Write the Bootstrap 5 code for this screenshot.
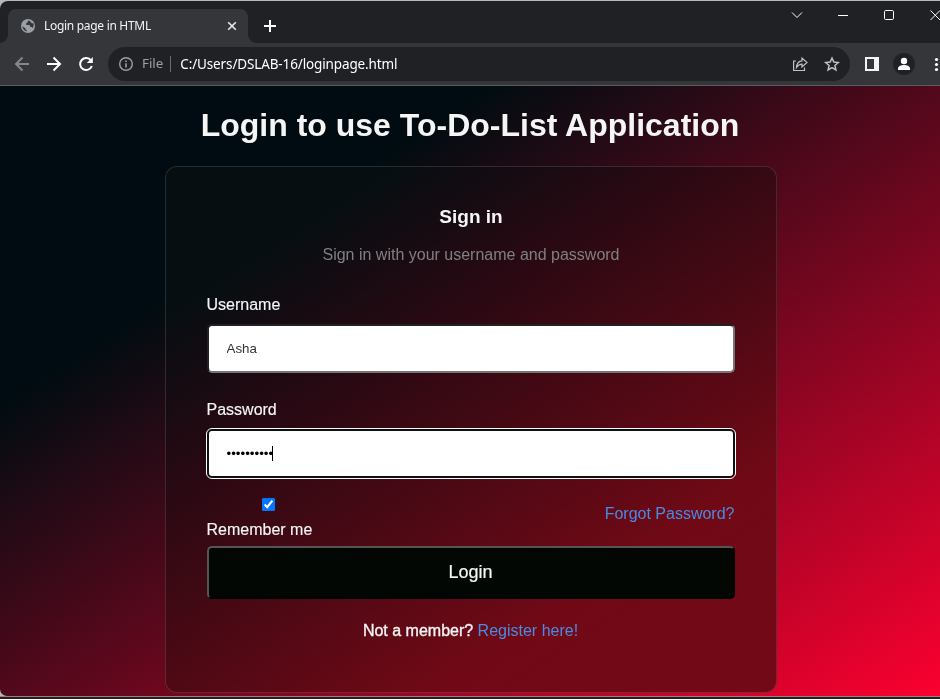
<!DOCTYPE html>
<html lang="en">
<head>
<meta charset="utf-8">
<title>Login page in HTML</title>
<link href="https://cdn.jsdelivr.net/npm/bootstrap@5.3.0/dist/css/bootstrap.min.css" rel="stylesheet">
<style>
  body { font-family: "Liberation Sans", Arial, sans-serif; background: #b4b9bb; width: 940px; height: 699px; overflow: hidden; }
  svg { display: block; flex: none; }
  .window { height: 696px; padding-top: 1px; }
  .chrome { font-family: "Noto Sans", "Open Sans", sans-serif; }
  .tabstrip { height: 42px; background: #202124; border-top-left-radius: 8px; padding-left: 8px; }
  .tab { width: 240px; height: 34px; margin-top: 8px; background: #35363a; border-radius: 8px 8px 0 0; padding: 0 11px 0 13px; position: relative; }
  .tab::before, .tab::after { content: ""; position: absolute; bottom: 0; width: 8px; height: 8px; }
  .tab::before { left: -8px; background: radial-gradient(circle at 0 0, #202124 7.5px, #35363a 8px); }
  .tab::after { right: -8px; background: radial-gradient(circle at 100% 0, #202124 7.5px, #35363a 8px); }
  .tab-title { font-size: 12px; color: #f1f3f4; margin-left: 9px; letter-spacing: -.3px; line-height: 16px; }
  .new-tab { margin: 18px 0 0 15px; }
  .toolbar { height: 43px; background: #35363a; border-bottom: 1px solid #5b5c60; padding-left: 14px; }
  .omnibox { width: 742px; height: 34px; border-radius: 17px; background: #202124; font-size: 13.5px; padding: 0 10px 0 11px; color: #fff; margin-left: 14px; }
  .divider { width: 1px; height: 16px; background: #6b6e72; margin: 0 9px 0 7px; }
  .scheme { color: #9aa0a6; margin-left: 9px; font-size: 13.3px; }
  .address { letter-spacing: -.13px; }
  .page { height: 610px; background: linear-gradient(147deg, #000c11 26%, #ff0030 101%); border-bottom-left-radius: 7px; }
  .page h1 { font-size: 32px; line-height: 38px; color: #f5f5f5; margin: 0; padding-top: 20px; height: 80px; }
  .glass { width: 612px; height: 527px; margin-left: 165px; padding: 0 41px; border: 1px solid rgba(255,255,255,.125); border-radius: 12px; background: rgba(11,15,13,.582); backdrop-filter: saturate(180%); color: #f5f5f5; line-height: 18px; }
  .glass h2 { font-size: 19px; line-height: 22px; margin: 0; padding-top: 39px; height: 78px; }
  .hint { color: #808080; height: 50px; margin: 0; padding-top: 1px; }
  .glass label { display: block; height: 29px; margin-left: -.5px; padding-top: 1px; }
  .glass label.second { margin-top: 27px; }
  .glass label, .options span { -webkit-text-stroke: .15px #f5f5f5; }
  .field { width: 528px; height: 49px; border-radius: 5px; background: #fff; color: #000; font-size: 13.33px; padding: 0 17.500px; }
  .field.user { border: 2px inset #767676; color: #333; outline: 0; display: block; }
  .field.pass { border: 2px solid #101010; outline: 1px solid #fff; }
  .caret { width: 1px; height: 15px; background: #000; margin-left: -1px; }
  .options { height: 68px; padding-top: 20px; }
  .options input { width: 13px; height: 13px; margin: 0 0 0 55px; display: block; }
  .options span { display: block; margin: 10px 0 0 -.5px; }
  .options a { margin: 7px .5px 0 0; }
  .glass a { color: #4a8be3; text-decoration: none; }
  .login { width: 528px; height: 53px; border: 2px outset #6b6b6b; border-radius: 5px; background: #030703; color: #f5f5f5; font-size: 18px; line-height: 20px; padding: 0 1px 2px 0; display: block; border-color: #555 #000 #000 #555; border-style: solid; -webkit-text-stroke: .2px #f5f5f5; }
  .signup { margin: 23px 0 0 -1px; }
  .signup span { -webkit-text-stroke: .35px #f5f5f5; }
  .bottomline { height: 3px; background: linear-gradient(#8e8286 1px, #2c1d1f 1px); }
</style>
<script src="https://cdn.jsdelivr.net/npm/bootstrap@5.3.0/dist/js/bootstrap.bundle.min.js"></script>
</head>
<body>
<div class="window">
  <header class="chrome">
    <div class="tabstrip d-flex">
      <div class="tab d-flex align-items-center">
        <svg width="14" height="14" viewBox="0 0 14 14"><circle cx="7" cy="7" r="7" fill="#9aa0a6"/><path d="M8.2 1.4c-.8 0-1.6.7-1.6 1.6 0 .7-.7.9-1.3.9v1.3c0 .6-.5.9-1 .9h3.6c.9 0 1.3.6 1.3 1.2v.8h1.1c.6 0 1 .5 1.1 1 1.4-1.7 1.5-3.5.8-5.200-.5.6-1.500.4-1.900-.2-.4-.7-.9-1.500-2.100-1.800zM1.400 7.200c.1 2.500 2 4.700 4.300 5.200v-1.100c-.7 0-1.200-.6-1.200-1.200v-.600z" fill="#35363a"/></svg>
        <span class="tab-title">Login page in HTML</span>
        <svg class="ms-auto" width="10" height="10" viewBox="0 0 10 10"><path d="M1.200 1.200l7.600 7.600M8.800 1.200L1.200 8.800" stroke="#e8eaed" stroke-width="1.600"/></svg>
      </div>
      <svg class="new-tab" width="14" height="14" viewBox="0 0 14 14"><path d="M7 1v12M1 7h12" stroke="#fff" stroke-width="2"/></svg>
      <svg class="ms-auto" width="150" height="30" viewBox="790 1 150 30" fill="none" stroke="#fff"><path d="M792 12.500l5 5 5-5"/><path d="M838 15.500h10"/><rect x="884.500" y="10.500" width="9" height="9" rx="1.200"/><path d="M930.500 10.500l9.500 9.500M940 10.500l-9.500 9.500"/></svg>
    </div>
    <div class="toolbar d-flex align-items-center">
      <svg width="80" height="20" viewBox="14 54 80 20" fill="none" stroke-width="2"><path d="M29 64H16M22.500 57.500L16 64l6.500 6.500" stroke="#85878a"/><path d="M47 64h13M53.500 57.500L60 64l-6.500 6.500" stroke="#fff"/><path d="M91 60.500A6 6 0 1 0 91.800 66" stroke="#fff"/><path d="M92.800 57v6h-6z" fill="#fff"/></svg>
      <div class="omnibox d-flex align-items-center">
        <svg width="14" height="14" viewBox="0 0 14 14"><circle cx="7" cy="7" r="6.300" fill="none" stroke="#9aa0a6" stroke-width="1.400"/><path d="M6.200 6.200h1.600v4.300H6.200zM6.200 3.400h1.600V5H6.200z" fill="#9aa0a6"/></svg>
        <span class="scheme">File</span><span class="divider"></span><span class="address">C:/Users/DSLAB-16/loginpage.html</span>
        <svg class="ms-auto" width="48" height="18" viewBox="792 55 48 18" fill="none" stroke="#bdc1c6" stroke-width="1.200"><path d="M796 61h-2.400v9.500h10.900v-3"/><path d="M796.500 67.500c.3-4.500 3-6.500 5.500-6.700V58l5 4.500-5 4.500v-2.800c-2.500 0-4 1-5.500 3.300z"/><path d="M832 58l1.800 4.100 4.500.4-3.400 3 1 4.400-3.900-2.300-3.900 2.300 1-4.400-3.400-3 4.500-.4z" stroke-width="1.500"/></svg>
      </div>
      <svg class="ms-auto" width="78" height="24" viewBox="862 52 78 24"><path d="M865 57h14v14h-14zM867 59v10h7V59z" fill="#f4f4f6" fill-rule="evenodd"/><circle cx="904" cy="64" r="11" fill="#202124"/><circle cx="904" cy="61" r="3.200" fill="#fff"/><path d="M898 70v-1.700c0-2.100 3.500-3.300 6-3.300s6 1.200 6 3.300V70z" fill="#fff"/><g fill="#fff"><circle cx="936.500" cy="59.500" r="1.600"/><circle cx="936.500" cy="64.500" r="1.600"/><circle cx="936.500" cy="69.500" r="1.600"/></g></svg>
    </div>
  </header>
  <main class="page">
    <h1 class="text-center fw-bold">Login to use To-Do-List Application</h1>
    <form class="glass">
      <h2 class="text-center fw-bold">Sign in</h2>
      <p class="hint text-center">Sign in with your username and password</p>
      <label for="user">Username</label>
      <input id="user" class="field user" type="text" value="Asha">
      <label class="second">Password</label>
      <div class="field pass d-flex align-items-center"><span>••••••••••</span><span class="caret"></span></div>
      <div class="options d-flex justify-content-between">
        <div><input type="checkbox" checked aria-label="Remember me"><span>Remember me</span></div>
        <a href="#">Forgot Password?</a>
      </div>
      <button class="login" type="button">Login</button>
      <p class="signup text-center"><span>Not a member?</span> <a href="#">Register here!</a></p>
    </form>
  </main>
</div>
<div class="bottomline"></div>
</body>
</html>
